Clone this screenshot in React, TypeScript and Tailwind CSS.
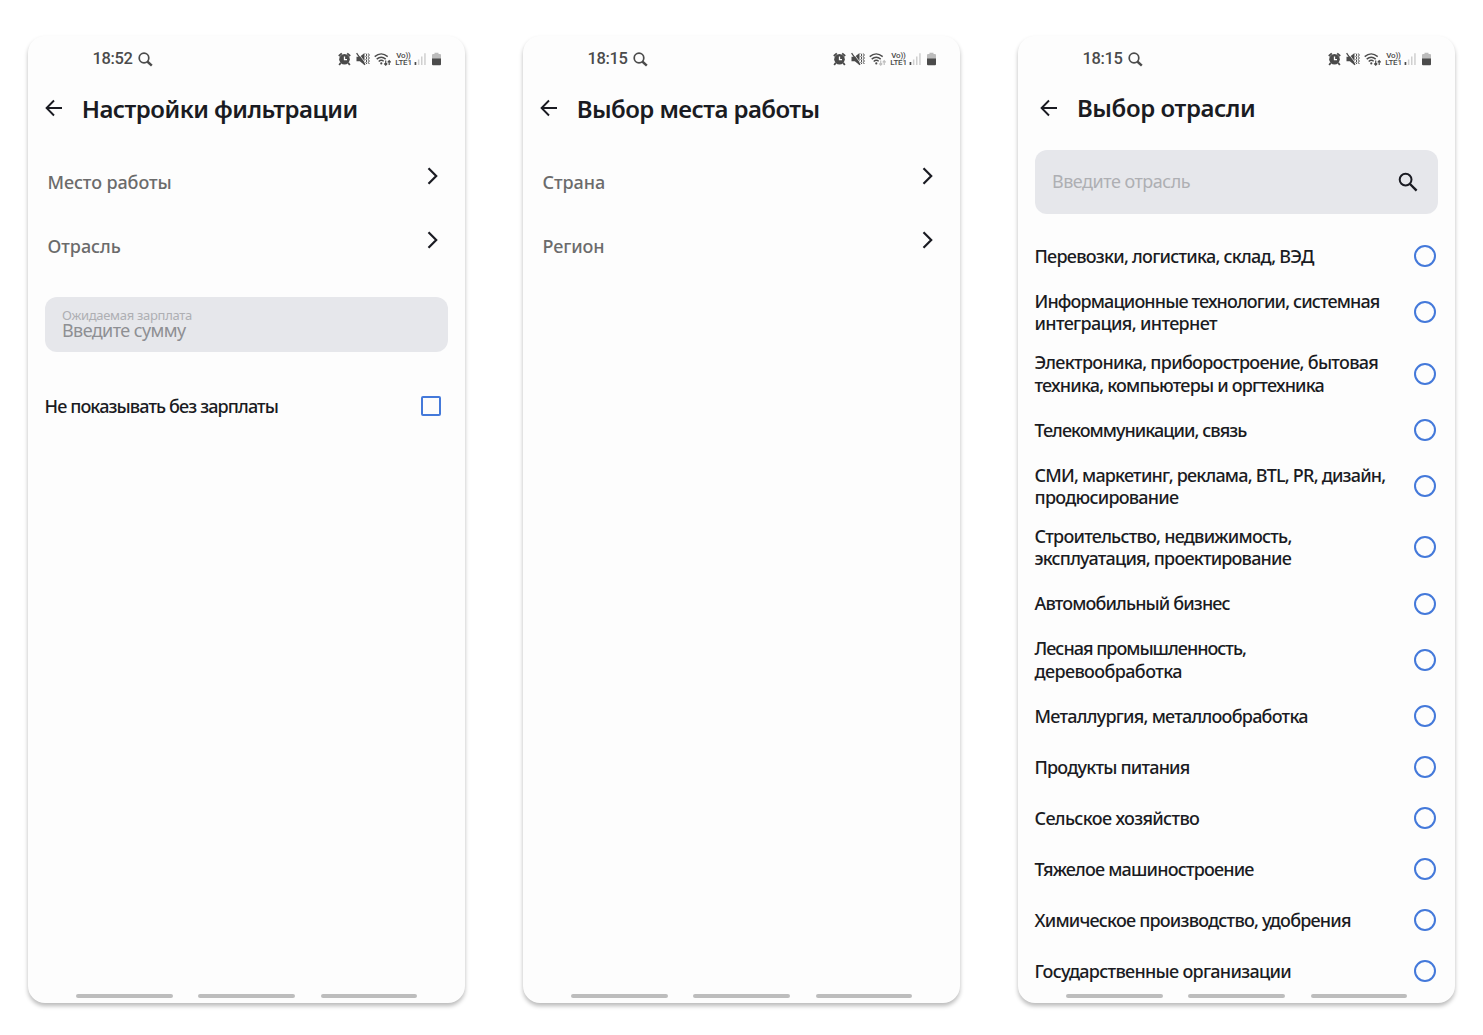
import React from "react";
import clsx from "clsx";

function StatusBar({ time, dim = false }: { time: string; dim?: boolean }) {
  return (
    <div className="flex h-[46px] shrink-0 items-center justify-between pr-[24px] pl-[64.5px] text-[#4b4b4b]">
      <div className="flex items-center gap-[5px]">
        <span className="pt-px font-[Roboto,sans-serif] text-[16.5px] leading-none font-medium tracking-[-0.35px]">{time}</span>
        <svg width="15" height="15" viewBox="0 0 15 15" fill="none" stroke="currentColor" className="mt-[1px]">
          <circle cx="6" cy="6" r="4.8" strokeWidth="1.7" />
          <path d="M9.3 9.5 13.8 13.6" strokeWidth="2.4" />
        </svg>
      </div>
      <div className="flex items-center">
        <svg width="13" height="14" viewBox="0 0 13 14">
          <circle cx="6.5" cy="7.2" r="5.3" fill="currentColor" />
          <path d="M.8 4 3.8 1.4M12.2 4 9.2 1.4M2.8 10.8 1.2 13M10.2 10.8 11.8 13" stroke="currentColor" strokeWidth="1.8" />
          <path d="M6.5 4.4V7.6H9" fill="none" stroke="#fdfdfd" strokeWidth="1.3" />
        </svg>
        <svg width="14" height="14" viewBox="0 0 14 14" className="ml-[5px]">
          <path d="M.5 4.7H3.8L8.5 1V13L3.8 9.3H.5Z" fill="currentColor" />
          <path d="M.6 1.2 9 12.8" stroke="currentColor" strokeWidth="1.3" />
          <path d="M2.2 1.2 9.4 10.8" stroke="#fdfdfd" strokeWidth=".8" />
          <path d="M9.9 1.5 10.9 3 9.9 4.5 10.9 6 9.9 7.5 10.9 9 9.9 10.5 10.9 12M12.3 1.5 13.3 3 12.3 4.5 13.3 6 12.3 7.5 13.3 9 12.3 10.5 13.3 12" fill="none" stroke="currentColor" strokeWidth="1" />
        </svg>
        <svg width="18" height="15" viewBox="0 0 18 15" fill="none" stroke="currentColor" className="ml-[4px]">
          <path d="M.7 4.6Q7.2-.8 13.7 4.6M2.7 7.1Q7.2 3.2 11.7 7.1M4.7 9.5Q7.2 7.3 9.7 9.2" strokeWidth="1.4" />
          <circle cx="7.3" cy="11.4" r="1.1" fill="currentColor" stroke="none" />
          <path d="M11.7 8.6V13M10.2 11.5 11.7 13.1 13.2 11.5M15.2 13V8.8M13.7 10.3 15.2 8.7 16.7 10.3" strokeWidth="1.2" className={clsx(dim && "opacity-35")} />
        </svg>
        <div className="ml-[3px] flex w-[17px] flex-col items-center font-[Roboto,sans-serif] leading-[7px] font-medium">
          <span className="text-[8px] tracking-[-0.2px]">Vo))</span>
          <span className="text-[8px] tracking-[-0.2px]">LTE1</span>
        </div>
        <svg width="13" height="14" viewBox="0 0 13 14" className="ml-[2px]">
          <path d="M.6 10H2.3V13H.6Z" fill="currentColor" />
          <path d="M3.9 7.5H5.4V13H3.9ZM7 4.5H8.5V13H7ZM10.2 1.2H11.7V13H10.2Z" fill="#cfcfcf" />
        </svg>
        <svg width="9" height="14" viewBox="0 0 9 14" className="ml-[5px]">
          <path d="M0 3Q0 2 1 2H2.5V.8H6.5V2H8Q9 2 9 3V7H0Z" fill="#bcbcbc" />
          <path d="M0 6.5H9V12.3Q9 13.3 8 13.3H1Q0 13.3 0 12.3Z" fill="currentColor" />
        </svg>
      </div>
    </div>
  );
}

function Phone({ time, title, tracking, shifted = false, dim = false, children }: {
  time: string;
  title: string;
  tracking: string;
  shifted?: boolean;
  dim?: boolean;
  children: React.ReactNode;
}) {
  return (
    <section className="relative flex h-[967px] w-[437px] shrink-0 flex-col rounded-[17px] bg-[#fdfdfd] shadow-[0_3px_4px_rgba(0,0,0,0.27)]">
      <StatusBar time={time} dim={dim} />
      <header className={clsx("flex h-[52px] shrink-0 items-center", shifted ? "pl-[21.5px]" : "pl-[17px]")}>
        <svg width="18" height="18" viewBox="0 0 18 18" fill="none" stroke="#1a1b22" strokeWidth="1.9">
          <path d="M17 9H2M9 1.5 1.6 9 9 16.5" />
        </svg>
        <h1 className={clsx("text-[24px] leading-[30px] font-semibold whitespace-nowrap text-[#1a1b22]", shifted ? "mt-0 ml-[19.5px]" : "mt-[2px] ml-[18.7px]", tracking)}>
          {title}
        </h1>
      </header>
      {children}
      <nav className="absolute inset-x-0 bottom-[5px] flex justify-between pr-[48px] pl-[48px]">
        <span className="h-[4.5px] w-[96.5px] rounded-full bg-[#bdbdbd]" />
        <span className="h-[4.5px] w-[96.5px] rounded-full bg-[#bdbdbd]" />
        <span className="h-[4.5px] w-[96.5px] rounded-full bg-[#bdbdbd]" />
      </nav>
    </section>
  );
}

function LinkRow({ label, tracking }: { label: string; tracking: string }) {
  return (
    <div className="flex h-[63.7px] items-center justify-between pr-[26px] pl-[19.5px]">
      <span className={clsx("pt-px text-[18px] font-medium text-[#6b6b6b]", tracking)}>{label}</span>
      <svg width="12" height="18" viewBox="0 0 12 18" fill="none" stroke="#1a1b22" strokeWidth="2.2" className="mb-[12px]">
        <path d="M1.5 1.3 9.2 9 1.5 16.7" />
      </svg>
    </div>
  );
}

type Line = [text: string, tracking: string];

const industries: Line[][] = [
  [["Перевозки, логистика, склад, ВЭД", "tracking-[-0.75px]"]],
  [["Информационные технологии, системная", "tracking-[-0.87px]"], ["интеграция, интернет", "tracking-[-0.66px]"]],
  [["Электроника, приборостроение, бытовая", "tracking-[-0.71px]"], ["техника, компьютеры и оргтехника", "tracking-[-0.8px]"]],
  [["Телекоммуникации, связь", "tracking-[-0.96px]"]],
  [["СМИ, маркетинг, реклама, BTL, PR, дизайн,", "tracking-[-0.79px]"], ["продюсирование", "tracking-[-0.75px]"]],
  [["Строительство, недвижимость,", "tracking-[-0.77px]"], ["эксплуатация, проектирование", "tracking-[-0.81px]"]],
  [["Автомобильный бизнес", "tracking-[-0.87px]"]],
  [["Лесная промышленность,", "tracking-[-0.99px]"], ["деревообработка", "tracking-[-0.62px]"]],
  [["Металлургия, металлообработка", "tracking-[-0.76px]"]],
  [["Продукты питания", "tracking-[-0.8px]"]],
  [["Сельское хозяйство", "tracking-[-0.65px]"]],
  [["Тяжелое машиностроение", "tracking-[-0.82px]"]],
  [["Химическое производство, удобрения", "tracking-[-0.79px]"]],
  [["Государственные организации", "tracking-[-0.7px]"]],
];

export default function App() {
  return (
    <main className="flex h-[1035px] w-[1483px] gap-[58px] overflow-hidden bg-white pt-[36px] pl-[28px] font-['Noto_Sans',sans-serif]">
      <Phone time="18:52" title="Настройки фильтрации" tracking="tracking-[-0.52px]">
        <div className="mt-[16px] flex flex-col">
          <LinkRow label="Место работы" tracking="tracking-[-0.1px]" />
          <LinkRow label="Отрасль" tracking="tracking-[-0.02px]" />
        </div>
        <div className="mt-[19.6px] mr-[17px] ml-[17px] flex h-[55px] flex-col rounded-[12px] bg-[#e6e7eb] pt-[11px] pl-[17px] whitespace-nowrap">
          <span className="text-[13px] leading-[14px] tracking-[-0.3px] text-[#aeafb3]">Ожидаемая зарплата</span>
          <span className="text-[18px] leading-[17px] tracking-[-0.6px] text-[#8e8f93]">Введите сумму</span>
        </div>
        <div className="mt-[40px] flex h-[28px] items-center justify-between pr-[24px] pl-[16.5px]">
          <span className="pt-px text-[18px] font-medium tracking-[-0.88px] text-[#1a1b22]">Не показывать без зарплаты</span>
          <span className="h-[20px] w-[20px] rounded-[2px] border-2 border-[#4479da]" />
        </div>
      </Phone>

      <Phone time="18:15" title="Выбор места работы" tracking="tracking-[-0.56px]" dim>
        <div className="mt-[16px] flex flex-col">
          <LinkRow label="Страна" tracking="tracking-[-0.05px]" />
          <LinkRow label="Регион" tracking="tracking-[-0.1px]" />
        </div>
      </Phone>

      <Phone time="18:15" title="Выбор отрасли" tracking="tracking-[-0.42px]" shifted>
        <div className="mt-[16px] mr-[17px] ml-[17px] flex h-[63.5px] shrink-0 items-center justify-between rounded-[12px] bg-[#e6e7eb] pr-[20px] pl-[17px]">
          <span className="text-[18px] tracking-[-0.5px] text-[#aeafb3]">Введите отрасль</span>
          <svg width="20" height="20" viewBox="0 0 20 20" fill="none" stroke="#1a1b22">
            <circle cx="7.6" cy="7.6" r="5.9" strokeWidth="2" />
            <path d="M12 12 18.6 18.6" strokeWidth="2.4" />
          </svg>
        </div>
        <ul className="mt-[17.3px] flex flex-col pr-[19px] pl-[16.5px]">
          {industries.map((lines) => (
            <li
              key={lines[0][0]}
              className={clsx("flex shrink-0 items-center justify-between", lines.length > 1 ? "h-[61.3px]" : "h-[51.05px]")}
            >
              <span className="flex flex-col text-[18px] leading-[22.5px] font-medium whitespace-nowrap text-[#1a1b22]">
                {lines.map(([text, tracking]) => (
                  <span key={text} className={tracking}>{text}</span>
                ))}
              </span>
              <span className="h-[22px] w-[22px] shrink-0 rounded-full border-2 border-[#4479da]" />
            </li>
          ))}
        </ul>
      </Phone>
    </main>
  );
}
